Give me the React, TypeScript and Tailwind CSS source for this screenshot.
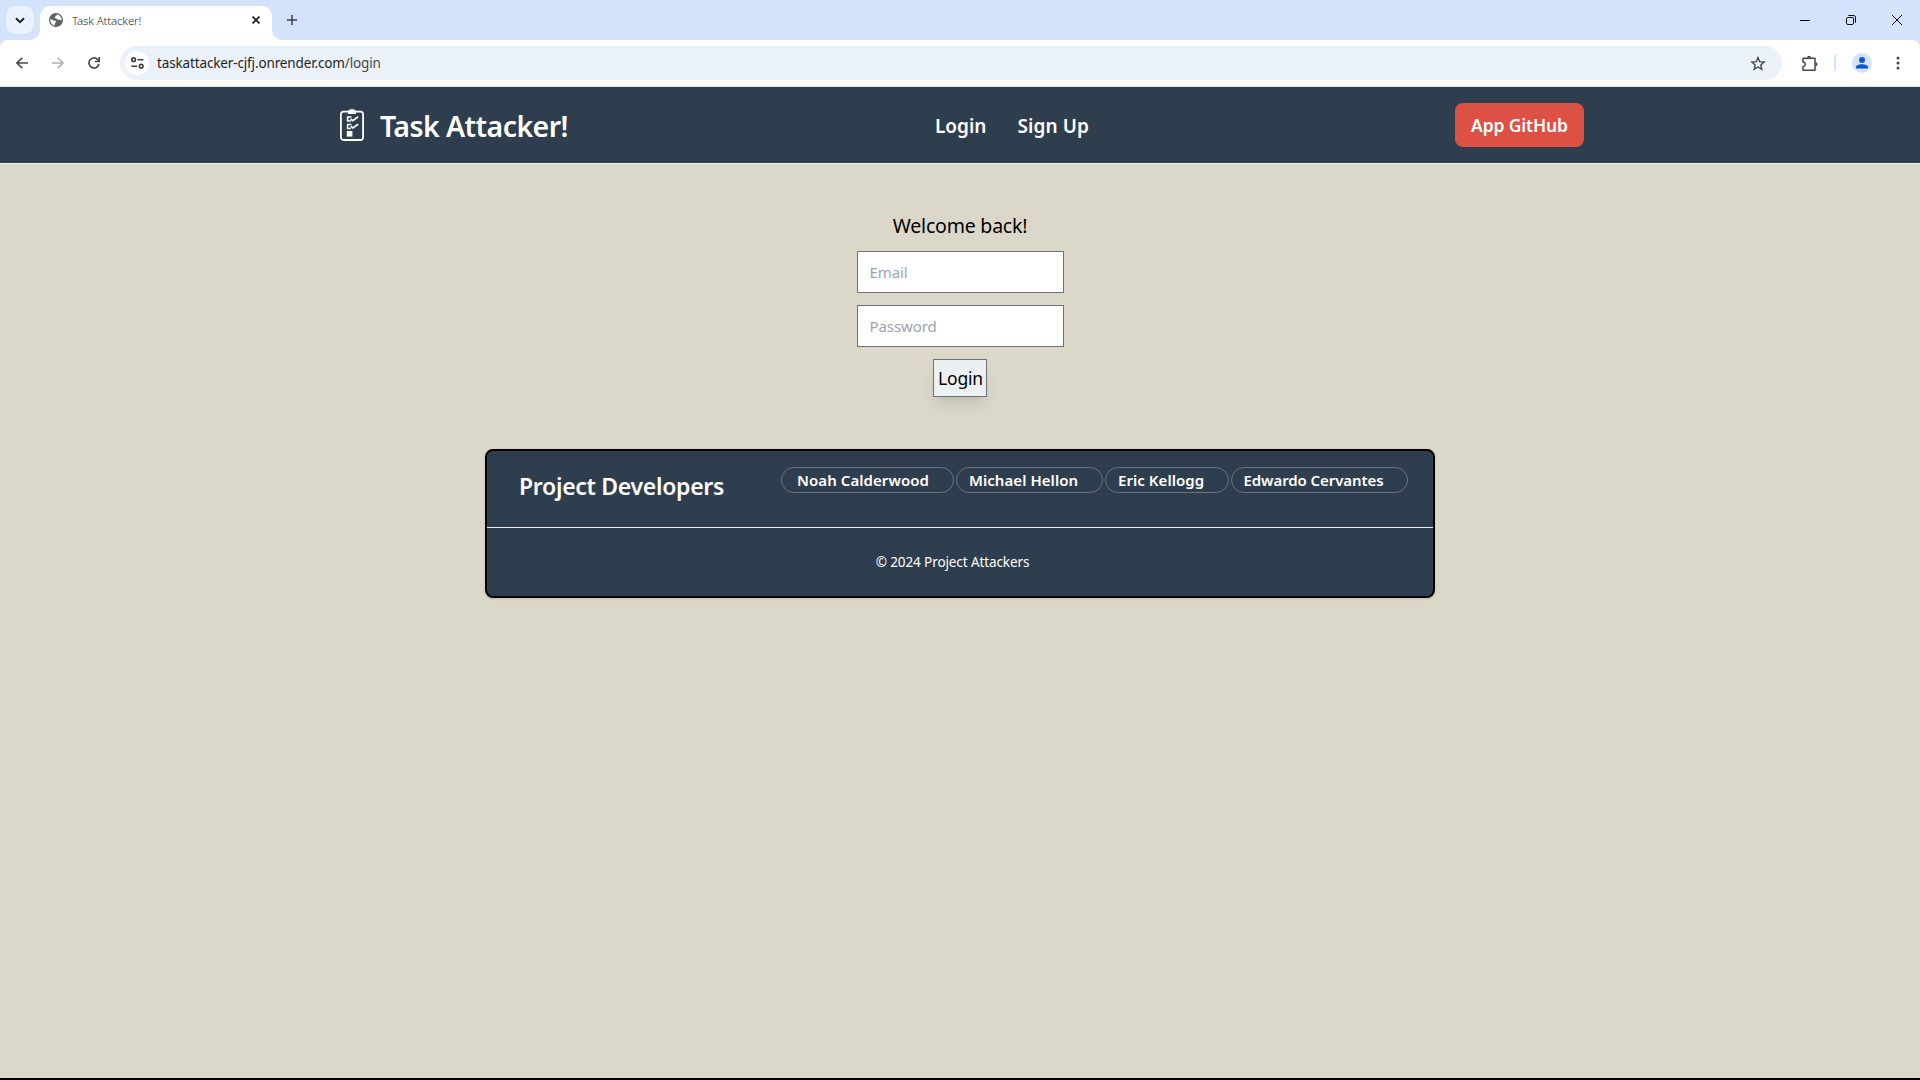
import { type ReactNode } from "react";

function TabStrip() {
  return (
    <div className="flex h-10 items-start bg-[#d3e3fb] pl-1.5">
      <button className="mt-1.5 flex h-7 w-7 items-center justify-center rounded-[10px] bg-[#e9f1fe]">
        <svg width="10" height="7" viewBox="0 0 10 7" fill="none" stroke="#1f1f1f" strokeWidth="2">
          <path d="M1 1.2 5 5.2 9 1.2" />
        </svg>
      </button>
      <div className="relative mt-1.5 ml-1.5 flex h-[34px] w-[232px] items-center rounded-t-[10px] bg-white pb-1.5 pl-[9px]">
        <svg className="absolute bottom-0 -left-2.5" width="10" height="10" viewBox="0 0 10 10">
          <path d="M10 0V10H0A10 10 0 0 0 10 0Z" fill="#fff" />
        </svg>
        <svg className="absolute -right-2.5 bottom-0" width="10" height="10" viewBox="0 0 10 10">
          <path d="M0 0V10H10A10 10 0 0 1 0 0Z" fill="#fff" />
        </svg>
        <svg width="14" height="14" viewBox="0 0 14 14">
          <circle cx="7" cy="7" r="7" fill="#5f6368" />
          <path
            d="M1.4 6.2 C2.6 6.3 4 6.9 4.6 7.4 C5.2 7.9 6.8 7.3 7.2 8.3 C7.5 9.3 6.4 9.6 5.9 10.3 L5.4 12.4 C3 11.8 1 9.4 1.4 6.2Z"
            fill="#fff"
          />
          <path
            d="M7.9 1.5 C10.4 1.8 12.3 3.9 12.6 6.3 C12.4 7.3 11.7 7.6 11.1 7.1 C10.3 6.4 8.6 7 7.9 5.9 C7.3 5 5.2 5.4 5.6 4.2 C6 3.3 7.8 3.2 7.9 1.5Z"
            fill="#fff"
          />
        </svg>
        <span className="mt-0.5 ml-[9px] text-[11.5px] font-[350] tracking-[-0.15px] text-[#1f1f1f]">Task Attacker!</span>
        <svg className="mr-3 ml-auto" width="8" height="8" viewBox="0 0 8 8" stroke="#1f1f1f" strokeWidth="1.7">
          <path d="M0.5 0.5 7.5 7.5M7.5 0.5 0.5 7.5" />
        </svg>
      </div>
      <svg className="mt-[15px] ml-[15px]" width="10" height="10" viewBox="0 0 10 10" stroke="#3c4043" strokeWidth="1.5">
        <path d="M5 0V10M0 5H10" />
      </svg>
      <div className="mt-[15px] mr-[18px] ml-auto flex h-2.5 items-center gap-9">
        <svg width="10" height="10" viewBox="0 0 10 10" stroke="#000">
          <path d="M0 5.5H10" />
        </svg>
        <svg width="10" height="10" viewBox="0 0 10 10" fill="none" stroke="#000">
          <rect x="0.5" y="2.5" width="7" height="7" rx="1.3" />
          <path d="M2.3 0.5H7.5A2 2 0 0 1 9.5 2.5V7.7" />
        </svg>
        <svg width="10" height="10" viewBox="0 0 10 10" stroke="#000">
          <path d="M0 0 10 10M10 0 0 10" />
        </svg>
      </div>
    </div>
  );
}

function Toolbar() {
  return (
    <div className="bg-[#d3e3fb]">
      <div className="flex h-[47px] items-center rounded-t-lg border-b border-[#dfe3e8] bg-white pl-4">
        <svg width="12" height="12" viewBox="0 0 12 12" fill="none" stroke="#474747" strokeWidth="1.6">
          <path d="M12 6H1.2M6.3 0.7 1 6 6.3 11.3" />
        </svg>
        <svg className="ml-6" width="12" height="12" viewBox="0 0 12 12" fill="none" stroke="#b1b1b1" strokeWidth="1.6">
          <path d="M0 6H10.8M5.7 0.7 11 6 5.7 11.3" />
        </svg>
        <svg className="ml-6" width="12" height="12" viewBox="0 0 12 12" fill="none" stroke="#474747" strokeWidth="1.7">
          <path d="M10.9 7A5 5 0 1 1 9.6 2.5L11 4" />
          <path d="M11.2 0V4.5H6.8" />
        </svg>
        <div className="ml-5 flex h-[34px] flex-1 items-center rounded-full bg-[#ebf1f9] pl-[5px]">
          <div className="flex h-6 w-6 items-center justify-center rounded-full bg-white">
            <svg width="13" height="12" viewBox="0 0 13 12" fill="none" stroke="#3c4043" strokeWidth="1.6">
              <circle cx="2.6" cy="2.7" r="1.8" />
              <path d="M6.5 2.7H12.4M0.4 9.2H6.2" />
              <circle cx="10.2" cy="9.2" r="1.8" />
            </svg>
          </div>
          <span className="mt-px ml-2 text-[13.5px] font-[370] tracking-[-0.14px] text-[#1f1f1f]">
            taskattacker-cjfj.onrender.com<span className="text-[#474747]">/login</span>
          </span>
          <svg className="mr-4 ml-auto" width="16" height="15" viewBox="0 0 16 15" fill="none" stroke="#474747" strokeWidth="1.4">
            <path d="M8 1.6 9.7 5.7 14.1 6.1 10.8 9 11.8 13.3 8 11 4.2 13.3 5.2 9 1.9 6.1 6.3 5.7Z" />
          </svg>
        </div>
        <svg className="ml-[19px]" width="17" height="17" viewBox="0 0 17 17">
          <path
            d="M2 3.2H14V15.2H2V11.4C5 11.6 5 6.9 2 7.1Z"
            fill="none"
            stroke="#474747"
            strokeWidth="1.5"
            strokeLinejoin="round"
          />
          <path d="M6 2.7A2 2 0 0 1 10 2.7ZM14.5 7.2A2 2 0 0 1 14.5 11.2Z" fill="#474747" />
        </svg>
        <div className="ml-4 h-4 w-0.5 bg-[#d3e3fd]" />
        <svg className="ml-4" width="20" height="20" viewBox="0 0 20 20">
          <circle cx="10" cy="10" r="10" fill="#d3e3fd" />
          <circle cx="10" cy="7" r="3" fill="#0b57d0" />
          <path d="M4 15.5V14.2C4 12.2 7 11.2 10 11.2S16 12.2 16 14.2V15.5Z" fill="#0b57d0" />
        </svg>
        <svg className="mr-5 ml-6" width="4" height="14" viewBox="0 0 4 14" fill="#474747">
          <circle cx="2" cy="2" r="1.5" />
          <circle cx="2" cy="7" r="1.5" />
          <circle cx="2" cy="12" r="1.5" />
        </svg>
      </div>
    </div>
  );
}

function ClipboardIcon() {
  return (
    <svg width="24" height="32" viewBox="0 0 24 32" fill="none" stroke="#fff">
      <rect x="0.9" y="2.6" width="22.2" height="28.4" rx="2.8" strokeWidth="1.8" />
      <path d="M8 5V1.6L9.2 1.4 9.8 0.2H14.2L14.8 1.4 16 1.6V5Z" fill="#fff" stroke="none" />
      <path d="M11.4 8H7.6V12H11" strokeWidth="1.5" />
      <path d="M10.6 9.8 12.8 11.6 18.2 7.8" strokeWidth="1.7" />
      <path d="M11.4 15.4H7.6V19.4H11" strokeWidth="1.5" />
      <path d="M10.6 17.2 12.8 19 18.2 15.2" strokeWidth="1.7" />
      <rect x="6.8" y="22" width="5.6" height="5.6" fill="#fff" stroke="none" />
    </svg>
  );
}

function NavBar() {
  return (
    <nav className="flex h-[77px] items-center border-b border-[#ecf0f1] bg-[#2f3e4e] pr-[336px] pl-[340px] font-semibold text-white">
      <div className="flex w-[595px] items-center">
        <ClipboardIcon />
        <span className="mt-0.5 ml-4 text-[28.5px] leading-9 tracking-[-0.57px]">Task Attacker!</span>
      </div>
      <div className="flex items-center pt-0.5 text-[19px]">
        <a className="w-[82.5px]">Login</a>
        <a className="tracking-[0.1px]">Sign Up</a>
      </div>
      <a className="ml-auto flex h-11 w-[129px] items-center justify-center rounded-lg bg-[#dd5044] text-[17.5px] tracking-[-0.15px]">
        App GitHub
      </a>
    </nav>
  );
}

function LoginForm() {
  return (
    <form className="flex flex-col items-center pt-12 text-black">
      <h2 className="text-[19.5px] leading-7 font-[370] tracking-[-0.2px]">Welcome back!</h2>
      <input
        className="mt-[11px] h-[42px] w-[207px] border border-[#6b7280] bg-white px-3 text-[15px] tracking-[-0.1px] placeholder:text-[#9ca3af]"
        placeholder="Email"
      />
      <input
        className="mt-3 h-[42px] w-[207px] border border-[#6b7280] bg-white px-3 text-[15px] tracking-[-0.1px] placeholder:text-[#9ca3af]"
        placeholder="Password"
      />
      <button
        type="button"
        className="mt-3 h-[38px] w-[54px] border border-[#6b7280] bg-[#ecf0f1] pl-px text-[17.5px] font-[370] tracking-[-0.2px] shadow-lg"
      >
        Login
      </button>
    </form>
  );
}

function Pill({ className, children }: { className: string; children: ReactNode }) {
  return (
    <li className={`flex h-[26px] items-center rounded-full border border-[#6b7280] whitespace-nowrap ${className}`}>
      {children}
    </li>
  );
}

function Footer() {
  return (
    <footer className="mx-auto mt-[52px] flex h-[149px] w-[950px] flex-col rounded-lg border-2 border-black bg-[#2f3e4e] text-white shadow">
      <div className="flex h-[77px] items-start border-b border-[#ecf0f1] pr-[25px] pl-8 font-semibold">
        <h3 className="mt-[19px] text-[23px] leading-8 tracking-[-0.3px]">Project Developers</h3>
        <ul className="mt-4 ml-auto flex gap-0.5 text-[15px]">
          <Pill className="w-[173px] pl-[15px] tracking-[0.07px]">Noah Calderwood</Pill>
          <Pill className="w-[147px] pl-3 tracking-[0.05px]">Michael Hellon</Pill>
          <Pill className="w-[124px] pl-3 tracking-[0.05px]">Eric Kellogg</Pill>
          <Pill className="w-[177px] pl-[11.5px] tracking-[-0.08px]">Edwardo Cervantes</Pill>
        </ul>
      </div>
      <p className="flex flex-1 items-center justify-center pr-[15px] text-[13.5px] tracking-[-0.1px]">
        © 2024 Project Attackers
      </p>
    </footer>
  );
}

export default function App() {
  return (
    <div className="flex h-[1080px] w-[1920px] flex-col overflow-hidden border-b-2 border-black bg-[#dcd8c9] font-['Noto_Sans','Open_Sans',sans-serif]">
      <TabStrip />
      <Toolbar />
      <NavBar />
      <LoginForm />
      <Footer />
    </div>
  );
}
